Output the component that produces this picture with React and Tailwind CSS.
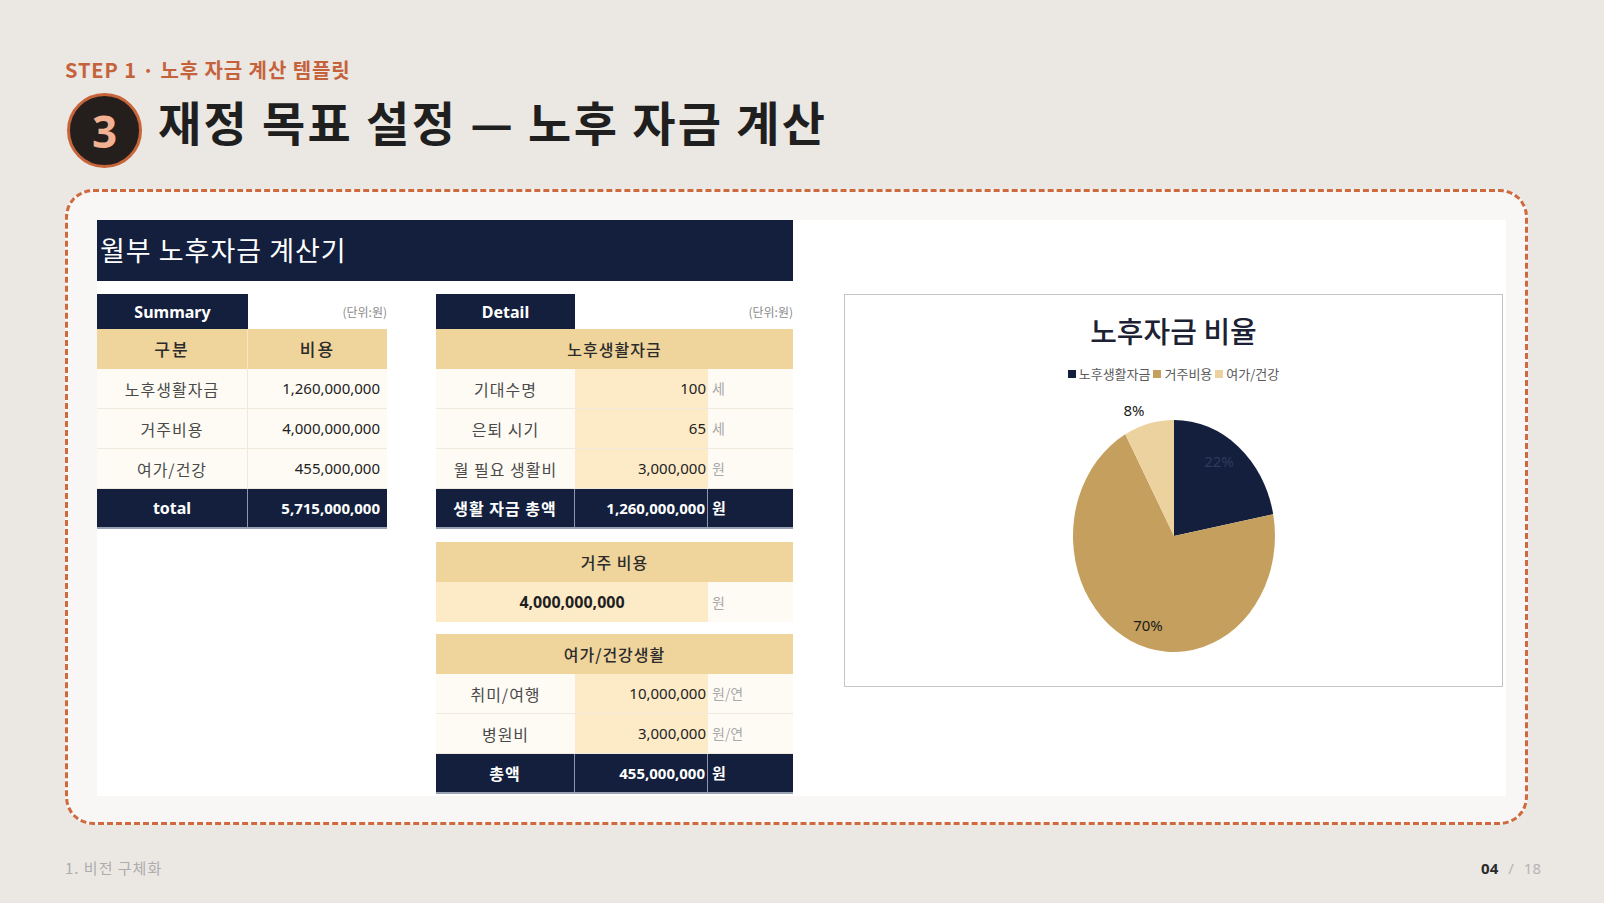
import React from 'react';

const KR = "font-['Noto_Sans_CJK_KR',sans-serif]";
const NUM = "font-['Noto_Sans','Noto_Sans_CJK_KR',sans-serif]";

// summary rows
const summaryRows = [
  { label: '노후생활자금', value: '1,260,000,000' },
  { label: '거주비용', value: '4,000,000,000' },
  { label: '여가/건강', value: '455,000,000' },
];

const lifeRows = [
  { label: '기대수명', value: '100', unit: '세' },
  { label: '은퇴 시기', value: '65', unit: '세' },
  { label: '월 필요 생활비', value: '3,000,000', unit: '원' },
];

const leisureRows = [
  { label: '취미/여행', value: '10,000,000', unit: '원/연' },
  { label: '병원비', value: '3,000,000', unit: '원/연' },
];

function TanHeader({ children }) {
  return (
    <div className={`h-[40px] bg-[#efd49c] flex items-center justify-center text-[16px] font-medium text-[#2b2b2b] tracking-[1px] ${KR}`}>
      {children}
    </div>
  );
}

function DetailRow({ label, value, unit }) {
  return (
    <div className="grid grid-cols-[139px_133px_85px] h-[40px] border-b border-[#efe9de]">
      <div className={`bg-[#fefbf5] flex items-center justify-center text-[16px] text-[#4a4a4a] tracking-[1px] ${KR}`}>{label}</div>
      <div className={`bg-[#fdebc8] flex items-center justify-end pr-[2px] text-[15px] text-[#222] ${NUM}`}>{value}</div>
      <div className={`bg-[#fefbf5] flex items-center pl-[4px] text-[14px] text-[#a9a9a9] ${KR}`}>{unit}</div>
    </div>
  );
}

function NavyRow({ label, value }) {
  return (
    <div className="grid grid-cols-[139px_133px_85px] h-[40px] bg-[#131f3d] border-b-2 border-[#9aa3b5] text-white font-bold">
      <div className={`flex items-center justify-center text-[16px] tracking-[1px] border-r border-[#8d96aa] ${KR}`}>{label}</div>
      <div className={`flex items-center justify-end pr-[2px] text-[15px] border-r border-[#8d96aa] ${NUM}`}>{value}</div>
      <div className={`flex items-center pl-[4px] text-[15px] ${KR}`}>원</div>
    </div>
  );
}

function SummaryTable() {
  return (
    <div className="w-[290px]">
      <div className="flex h-[35px]">
        <div className={`w-[151px] bg-[#131f3d] text-white font-bold text-[16px] flex items-center justify-center ${NUM}`}>Summary</div>
        <div className={`flex-1 flex items-center justify-end text-[12px] text-[#8a8a8a] ${KR}`}>(단위:원)</div>
      </div>
      <div className={`grid grid-cols-[151px_139px] h-[40px] bg-[#efd49c] text-[17px] font-medium text-[#2b2b2b] ${KR}`}>
        <div className="flex items-center justify-center border-r border-[#f7e6c3] tracking-[2px]">구분</div>
        <div className="flex items-center justify-center tracking-[2px]">비용</div>
      </div>
      {summaryRows.map((r) => (
        <div key={r.label} className="grid grid-cols-[151px_139px] h-[40px] border-b border-[#efe9de] bg-[#fefbf5]">
          <div className={`flex items-center justify-center border-r border-[#efe9de] text-[16px] text-[#4a4a4a] tracking-[1px] ${KR}`}>{r.label}</div>
          <div className={`flex items-center justify-end pr-[7px] text-[15px] text-[#222] ${NUM}`}>{r.value}</div>
        </div>
      ))}
      <div className={`grid grid-cols-[151px_139px] h-[40px] bg-[#131f3d] border-b-2 border-[#9aa3b5] text-white font-bold ${NUM}`}>
        <div className="flex items-center justify-center text-[16px] border-r border-[#8d96aa]">total</div>
        <div className="flex items-center justify-end pr-[7px] text-[15px]">5,715,000,000</div>
      </div>
    </div>
  );
}

function DetailTable() {
  return (
    <div className="w-[357px]">
      <div className="flex h-[35px]">
        <div className={`w-[139px] bg-[#131f3d] text-white font-bold text-[16px] flex items-center justify-center ${NUM}`}>Detail</div>
        <div className={`flex-1 flex items-center justify-end text-[12px] text-[#8a8a8a] ${KR}`}>(단위:원)</div>
      </div>
      <TanHeader>노후생활자금</TanHeader>
      {lifeRows.map((r) => <DetailRow key={r.label} {...r} />)}
      <NavyRow label="생활 자금 총액" value="1,260,000,000" />

      <div className="mt-[13px]">
        <TanHeader>거주 비용</TanHeader>
        <div className="grid grid-cols-[272px_85px] h-[40px]">
          <div className={`bg-[#fdebc8] flex items-center justify-center text-[16px] font-bold text-[#1f1f1f] ${NUM}`}>4,000,000,000</div>
          <div className={`bg-[#fefbf5] flex items-center pl-[4px] text-[14px] text-[#a9a9a9] ${KR}`}>원</div>
        </div>
      </div>

      <div className="mt-[12px]">
        <TanHeader>여가/건강생활</TanHeader>
        {leisureRows.map((r) => <DetailRow key={r.label} {...r} />)}
        <NavyRow label="총액" value="455,000,000" />
      </div>
    </div>
  );
}

function PieChart() {
  return (
    <div className="w-[659px] h-[393px] border border-[#c4c4c4] bg-white flex flex-col items-center">
      <div className={`mt-[16px] h-[38px] leading-[38px] text-[29px] font-medium text-[#1c2133] ${KR}`}>노후자금 비율</div>
      <div className={`mt-[16px] h-[18px] flex items-center gap-[3px] text-[13px] text-[#5a5a5a] ${KR}`}>
        <span className="w-[8px] h-[8px] bg-[#131f3d]" />
        <span>노후생활자금</span>
        <span className="w-[8px] h-[8px] bg-[#c59f5d]" />
        <span>거주비용</span>
        <span className="w-[8px] h-[8px] bg-[#ecd29e]" />
        <span>여가/건강</span>
      </div>
      <svg width="657" height="301" viewBox="0 89 657 301" className="block">
        <path d="M329,242 L329,126 A101,116 0 0 1 428.2,220.3 Z" fill="#131f3d" />
        <path d="M329,242 L428.2,220.3 A101,116 0 1 1 280.3,140.3 Z" fill="#c59f5d" />
        <path d="M329,242 L280.3,140.3 A101,116 0 0 1 329,126 Z" fill="#ecd29e" />
        <g fontFamily="'Noto Sans', sans-serif" fontSize="15" textAnchor="middle">
          <text x="289" y="122" fill="#1a1a1a">8%</text>
          <text x="374" y="173" fill="#2f3a5c">22%</text>
          <text x="303" y="337" fill="#1a1a1a">70%</text>
        </g>
      </svg>
    </div>
  );
}

export default function App() {
  return (
    <div className={`w-full h-[903px] bg-[#ebe7e3] flex flex-col pl-[65px] ${KR}`}>
      {/* heading */}
      <div className="mt-[57px] h-[26px] leading-[26px] text-[20px] font-bold text-[#c5623b] tracking-[0.9px]">
        STEP 1 · 노후 자금 계산 템플릿
      </div>
      <div className="mt-[10px] flex items-center">
        <div className="ml-[2px] w-[75px] h-[75px] rounded-full bg-[#241f1c] border-[3px] border-[#c8643a] flex items-center justify-center">
          <span className={`text-[44px] font-bold leading-none text-[#f2b193] ${NUM}`}>3</span>
        </div>
        <h1 className="ml-[16px] -mt-[20px] text-[47px] font-bold text-[#1f1f1f] leading-none tracking-[2.3px]">
          재정 목표 설정 — 노후 자금 계산
        </h1>
      </div>

      {/* dashed card */}
      <div className="mt-[21px] w-[1463px] h-[636px] rounded-[28px] border-[3px] border-dashed border-[#cf6a3f] bg-[#f8f7f5] pl-[29px] pt-[28px] pr-[19px] pb-[26px]">
        <div className="w-[1409px] h-[576px] bg-white flex">
          <div className="w-[696px] flex flex-col">
            <div className="h-[61px] bg-[#131f3d] flex items-center pl-[3px] text-[27px] text-white tracking-[1px]">
              월부 노후자금 계산기
            </div>
            <div className="mt-[13px] flex gap-[49px]">
              <SummaryTable />
              <DetailTable />
            </div>
          </div>
          <div className="ml-[51px] mt-[74px]">
            <PieChart />
          </div>
        </div>
      </div>

      {/* footer */}
      <div className="mt-[33px] w-[1476px] flex items-center justify-between h-[20px] text-[15px]">
        <span className="text-[#adadad] tracking-[1px]">1. 비전 구체화</span>
        <span className={`flex items-center gap-[10px] ${NUM}`}>
          <span className="font-bold text-[#2a2a2a]">04</span>
          <span className="text-[#b5b5b5]">/</span>
          <span className="text-[#b5b5b5]">18</span>
        </span>
      </div>
    </div>
  );
}
